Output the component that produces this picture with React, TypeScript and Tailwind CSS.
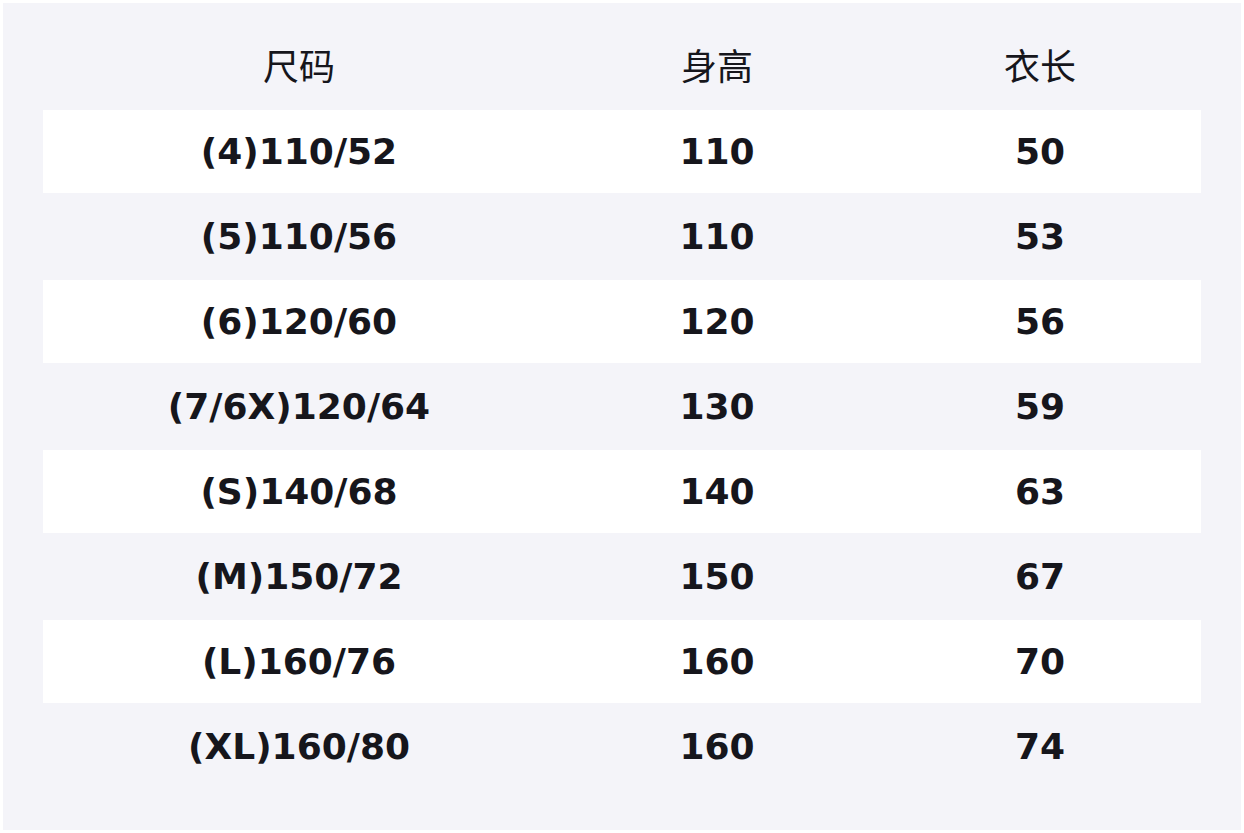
const rows = [
  ['(4)110/52', '110', '50'],
  ['(5)110/56', '110', '53'],
  ['(6)120/60', '120', '56'],
  ['(7/6X)120/64', '130', '59'],
  ['(S)140/68', '140', '63'],
  ['(M)150/72', '150', '67'],
  ['(L)160/76', '160', '70'],
  ['(XL)160/80', '160', '74'],
];

export default function App() {
  return (
    <div className="w-[1244px] h-[833px] bg-white p-[3px]">
      <div
        className="h-[827px] bg-[#f4f4f9] px-[40px] pt-[40px] text-[#16161c]"
        style={{ fontFamily: '"DejaVu Sans", "Noto Sans CJK SC", sans-serif' }}
      >
        {/* header */}
        <div className="grid grid-cols-[512px_324px_322px] h-[67px] pt-[3px] text-[36px] leading-[43px]">
          <div className="text-center">尺码</div>
          <div className="text-center">身高</div>
          <div className="text-center">衣长</div>
        </div>

        {rows.map((r, i) => (
          <div
            key={i}
            className={
              i % 2 === 0
                ? 'grid grid-cols-[512px_324px_322px] items-center h-[83px] bg-white text-[36px] font-bold'
                : 'grid grid-cols-[512px_324px_322px] items-center h-[87px] text-[36px] font-bold'
            }
          >
            <div className="text-center">{r[0]}</div>
            <div className="text-center">{r[1]}</div>
            <div className="text-center">{r[2]}</div>
          </div>
        ))}
      </div>
    </div>
  );
}
